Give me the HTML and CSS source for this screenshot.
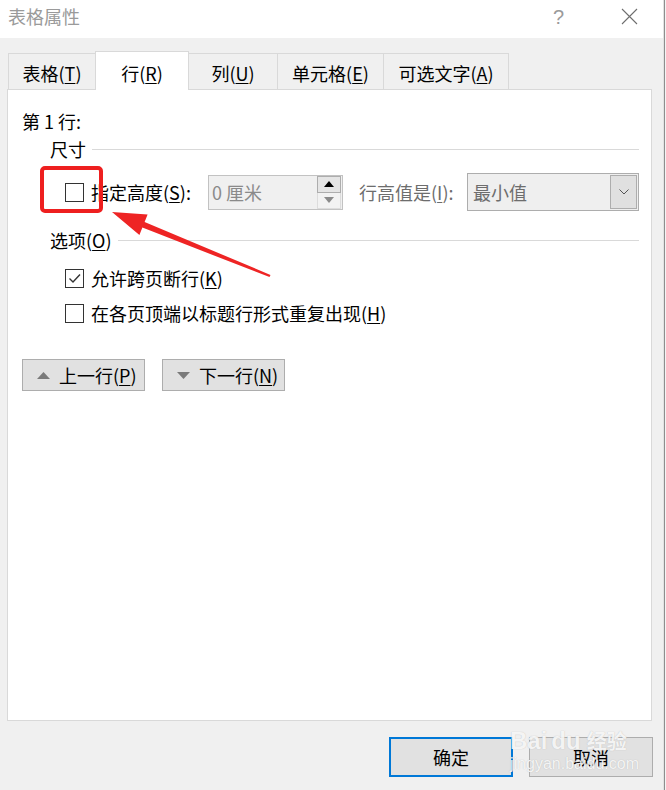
FILE: index.html
```html
<!DOCTYPE html>
<html lang="zh-CN">
<head>
<meta charset="utf-8">
<title>表格属性</title>
<link rel="stylesheet" href="styles.css">
</head>
<body>
<div class="screen">
  <div class="dialog">
    <div class="titlebar">
      <span class="title">表格属性</span>
      <span class="help">?</span>
      <span class="close"><svg width="17" height="17" viewBox="0 0 17 17"><path d="M1 1 L16 16 M16 1 L1 16" stroke="#6e6e6e" stroke-width="1.1" fill="none"/></svg></span>
    </div>
    <div class="content">
      <div class="tabs">
        <div class="tab t1">表格(<u>T</u>)</div>
        <div class="tab t2 active">行(<u>R</u>)</div>
        <div class="tab t3">列(<u>U</u>)</div>
        <div class="tab t4">单元格(<u>E</u>)</div>
        <div class="tab t5">可选文字(<u>A</u>)</div>
      </div>
      <div class="panel">
        <div class="rowlabel">第 1 行:</div>
        <div class="group"><span>尺寸</span><span class="rule"></span></div>
        <div class="size-row">
          <span class="check"></span>
          <span class="label lbl-height">指定高度(<u>S</u>):</span>
          <div class="spin">
            <span class="spin-value">0 厘米</span>
            <div class="spin-btns">
              <span class="spin-up"><svg width="10" height="6" viewBox="0 0 10 6"><path d="M0 6 L5 0 L10 6 Z" fill="#000"/></svg></span>
              <span class="spin-down"><svg width="10" height="6" viewBox="0 0 10 6"><path d="M0 0 L10 0 L5 6 Z" fill="#8a8a8a"/></svg></span>
            </div>
          </div>
          <span class="label lbl-rule disabled">行高值是(<u>I</u>):</span>
          <div class="select">
            <span class="select-value">最小值</span>
            <span class="select-btn"><svg width="10" height="6" viewBox="0 0 10 6"><path d="M0.5 0.5 L5 5 L9.5 0.5" stroke="#555" stroke-width="1" fill="none"/></svg></span>
          </div>
        </div>
        <div class="group group-opt"><span>选项(<u>O</u>)</span><span class="rule"></span></div>
        <div class="opt-row first">
          <span class="check checked"><svg width="17" height="17" viewBox="0 0 17 17"><path d="M3.5 8.5 L7 12 L14 4.5" stroke="#333" stroke-width="1.4" fill="none"/></svg></span>
          <span class="label">允许跨页断行(<u>K</u>)</span>
        </div>
        <div class="opt-row">
          <span class="check"></span>
          <span class="label">在各页顶端以标题行形式重复出现(<u>H</u>)</span>
        </div>
        <div class="nav">
          <button class="navbtn"><svg width="13" height="7" viewBox="0 0 13 7"><path d="M0 7 L6.5 0 L13 7 Z" fill="#7a7a7a"/></svg><span>上一行(<u>P</u>)</span></button>
          <button class="navbtn"><svg width="13" height="7" viewBox="0 0 13 7"><path d="M0 0 L13 0 L6.5 7 Z" fill="#7a7a7a"/></svg><span>下一行(<u>N</u>)</span></button>
        </div>
      </div>
      <div class="footer">
        <button class="btn primary">确定</button>
        <button class="btn">取消</button>
      </div>
    </div>
  </div>
  <div class="edge"></div>

  <div class="redbox"></div>
  <svg class="arrow" width="666" height="790" viewBox="0 0 666 790">
    <polygon points="112,212 147.6,214.6 144.6,222 270.5,274.9 269.5,277.1 142.4,227.6 139.4,235" fill="#ee2424"/>
  </svg>
  <div class="watermark">
    <div class="wm-top"><span class="wm-bai">Bai</span><span class="wm-du">du</span><span class="wm-jy">经验</span></div>
    <div class="wm-url">jingyan.baidu.com</div>
  </div>
</div>
</body>
</html>
```

FILE: styles.css
```css
* { box-sizing: border-box; }
html, body { margin: 0; padding: 0; }
body {
  width: 666px;
  height: 790px;
  overflow: hidden;
  background: #f0f0f0;
  font-family: "Noto Sans CJK SC", "Microsoft YaHei", sans-serif;
  font-size: 18px;
  line-height: 24px;
  color: #000;
}
u { text-decoration: underline; text-underline-offset: 2px; text-decoration-thickness: 1px; }

.screen { position: relative; width: 666px; height: 790px; display: flex; }
.dialog { width: 663px; height: 790px; background: #f0f0f0; display: flex; flex-direction: column; }
.edge { width: 3px; height: 790px; background: #8e8e8e; border-left: 1px solid #e2e2e2; border-right: 1px solid #f4f4f4; }

.titlebar { height: 38px; background: #fff; display: flex; align-items: flex-start; padding: 4px 0 0 8px; }
.title { color: #9a9a9a; }
.help { margin-left: auto; margin-right: 57px; color: #9a9a9a; font-family: "Liberation Sans", sans-serif; font-size: 20px; line-height: 24px; margin-top: 1px; }
.close { width: 17px; height: 17px; margin-top: 4px; margin-right: 25px; display: block; }
.close svg { display: block; }

.content { flex: 1; padding: 13px 10px 0 7px; display: flex; flex-direction: column; }

.tabs { display: flex; align-items: flex-start; height: 39px; margin-bottom: -1px; padding-left: 1px; position: relative; z-index: 1; }
.tab { height: 36px; margin-top: 2px; border: 1px solid #d9d9d9; border-bottom: none; background: #f0f0f0; text-align: center; padding-top: 7px; margin-left: -1px; white-space: nowrap; }
.tab.t1 { width: 88px; margin-left: 0; }
.tab.t2 { width: 94px; }
.tab.t3 { width: 90px; }
.tab.t4 { width: 107px; }
.tab.t5 { width: 126px; }
.tab.active { height: 39px; margin-top: 0; background: #fff; padding-top: 9px; }

.panel { width: 645px; height: 632px; background: #fff; border: 1px solid #d9d9d9; padding: 19px 12px 0 14px; }

.rowlabel { height: 24px; }
.group { display: flex; align-items: center; margin-top: 4px; margin-left: 28px; height: 24px; }
.group .rule { flex: 1; height: 1px; background: #d9d9d9; margin-left: 6px; margin-top: 1px; }
.group-opt { margin-top: 17px; }

.size-row { display: flex; align-items: center; height: 38px; margin-top: 12px; margin-left: 43px; }
.check { width: 19px; height: 19px; border: 1px solid #333; background: #fff; flex: none; display: flex; align-items: center; justify-content: center; }
.check svg { display: block; }
.label { margin-left: 7px; white-space: nowrap; }
.lbl-height { width: 117px; flex: none; }
.lbl-rule { width: 108px; flex: none; margin-left: 16px; }
.disabled { color: #6d6d6d; }

.spin { width: 135px; height: 35px; border: 1px solid #c2c2c2; background: #f0f0f0; display: flex; align-items: center; flex: none; padding: 1px; }
.spin-value { flex: 1; color: #8a8a8a; padding-left: 2px; }
.spin-btns { width: 24px; height: 33px; display: flex; flex-direction: column; }
.spin-up, .spin-down { flex: 1; display: flex; align-items: center; justify-content: center; border: 1px solid #c9c9c9; background: #ececec; }
.spin-up { border-color: #adadad; background: #e5e5e5; }
.spin-down { border-top: none; background: #f2f2f2; border-color: #dcdcdc; }
.spin-up svg, .spin-down svg { display: block; }

.select { width: 172px; height: 38px; border: 1px solid #adadad; background: #efefef; display: flex; align-items: center; flex: none; padding: 1px; }
.select-value { flex: 1; color: #6d6d6d; padding-left: 4px; }
.select-btn { width: 27px; height: 34px; border: 1px solid #adadad; background: #e0e0e0; display: flex; align-items: center; justify-content: center; }
.select-btn svg { display: block; }

.opt-row { display: flex; align-items: center; height: 24px; margin-top: 11px; margin-left: 43px; }
.opt-row.first { margin-top: 14px; }

.nav { display: flex; gap: 17px; margin-top: 34px; }
.navbtn { width: 123px; height: 32px; border: 1px solid #adadad; background: #e1e1e1; font: inherit; color: #000; display: flex; align-items: center; padding: 0 0 0 14px; gap: 9px; }
.navbtn svg { display: block; flex: none; }

.footer { display: flex; justify-content: flex-end; gap: 16px; margin-top: 16px; }
.btn { width: 124px; height: 40px; border: 1px solid #adadad; background: #e1e1e1; font: inherit; color: #000; padding: 0; }
.btn.primary { border: 2px solid #0078d7; }

.redbox { position: absolute; left: 40px; top: 166px; width: 63px; height: 47px; border: 4px solid #ee1f1f; border-radius: 5px; }
.arrow { position: absolute; left: 0; top: 0; pointer-events: none; }

.watermark { position: absolute; left: 510px; top: 714px; width: 125px; color: rgba(255,255,255,0.85); text-shadow: 0 0 1px rgba(150,150,150,0.6); font-family: "Liberation Sans", "Noto Sans CJK SC", sans-serif; pointer-events: none; }
.wm-top { display: flex; align-items: flex-end; height: 40px; font-weight: bold; }
.wm-bai { font-size: 24px; line-height: 26px; }
.wm-du { font-size: 24px; line-height: 26px; margin-left: 4px; }
.wm-jy { font-size: 20px; line-height: 26px; margin-left: 6px; font-family: "Noto Sans CJK SC", sans-serif; }
.wm-url { font-size: 16px; line-height: 18px; margin-top: 1px; }
```
